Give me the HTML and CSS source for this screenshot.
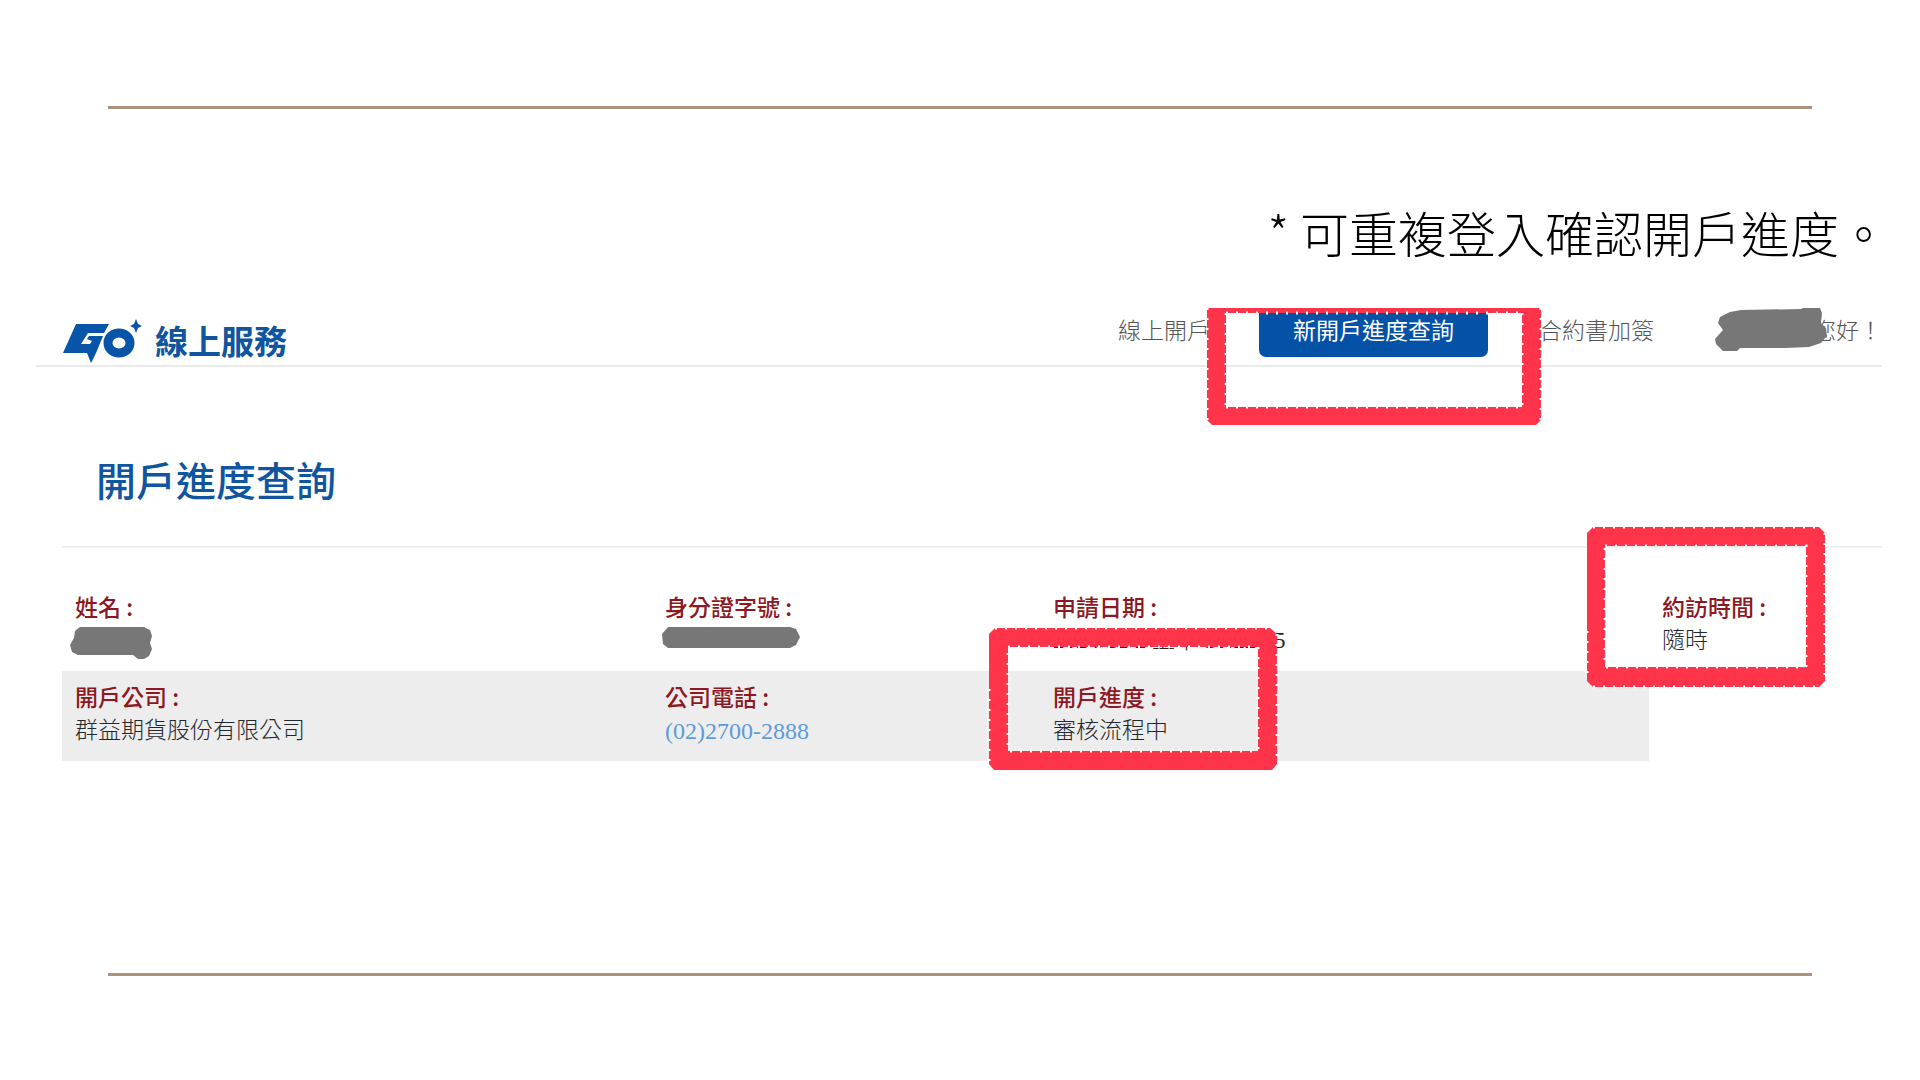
FILE: index.html
```html
<!DOCTYPE html>
<html lang="zh-Hant">
<head>
<meta charset="utf-8">
<title>開戶進度查詢</title>
<link rel="stylesheet" href="styles.css">
</head>
<body>
<main class="slide">
  <p class="note">* 可重複登入確認開戶進度。</p>
  <section class="shot">
    <header class="topbar">
      <a class="brand" href="#">
        <svg class="logo" viewBox="0 0 82 46" aria-hidden="true">
          <path fill="#0754a8" d="M14 6H47L42 15H26L19 26H28L30 23L25 21L27 18H41L34 35L29 45L25 35H1Z"/>
          <ellipse cx="57" cy="25" rx="11" ry="10" fill="none" stroke="#0754a8" stroke-width="9"/>
          <path fill="#0754a8" d="M74 1L76 6L80 8L76 10L74 15L72 10L68 8L72 6Z"/>
        </svg>
        <span class="brand-name">線上服務</span>
      </a>
      <nav class="nav">
        <a class="nav-link" href="#">線上開戶</a>
        <button class="nav-button" type="button">新開戶進度查詢</button>
        <a class="nav-link" href="#">合約書加簽</a>
        <span class="greeting">您好！
          <svg class="mask mask-user" viewBox="0 0 112 44" aria-hidden="true"><path d="M15 4L26 2L86 1L88 0H105L107 5L106 15L111 20L112 28L106 35L94 39L70 40H25L22 43H8L1 36L0 31L8 22L3 15L5 9Z"/></svg>
        </span>
        <svg class="frame frame-nav" viewBox="0 0 336 118" aria-hidden="true">
          <path class="band" d="M1 0V112L6 117H330L335 112V0Z M20 5H316V99H20Z"/>
          <path class="teeth" d="M1 0V112M335 0V112M20 5V99M316 5V99M20 5H316M20 99H316"/>
        </svg>
      </nav>
    </header>
    <h1 class="title">開戶進度查詢</h1>
    <dl class="details">
      <div class="row">
        <div class="cell"><dt>姓名 :</dt><dd>
          <svg class="mask mask-name" viewBox="0 0 82 32" aria-hidden="true"><path d="M10 0H74L80 3L82 9L80 16L82 22L79 29L74 32H68L63 28H8L2 25L0 18L4 11L5 4Z"/></svg></dd></div>
        <div class="cell"><dt>身分證字號 :</dt><dd>
          <svg class="mask mask-id" viewBox="0 0 138 22" aria-hidden="true"><path d="M6 0H128L134 2L138 10L134 18L128 21H6L1 17L0 7Z"/></svg></dd></div>
        <div class="cell"><dt>申請日期 :</dt><dd>2024/12/2 上午 10:22:25</dd></div>
        <div class="cell cell-visit"><dt>約訪時間 :</dt><dd>隨時</dd>
          <svg class="frame frame-visit" viewBox="0 0 240 162" aria-hidden="true">
            <path class="band" d="M7 1H233L239 7V155L233 161H7L1 155V7Z M19 20H220V141H19Z"/>
            <path class="teeth" d="M7 1H233M239 7V155M7 161H233M1 105V155M19 20H220V141H19Z"/>
          </svg>
        </div>
      </div>
      <div class="row row-alt">
        <div class="cell"><dt>開戶公司 :</dt><dd>群益期貨股份有限公司</dd></div>
        <div class="cell"><dt>公司電話 :</dt><dd><a class="phone" href="tel:0227002888">(02)2700-2888</a></dd></div>
        <div class="cell cell-progress"><dt>開戶進度 :</dt><dd>審核流程中</dd>
          <svg class="frame frame-progress" viewBox="0 0 290 144" aria-hidden="true">
            <path class="band" d="M7 1H282L289 7V137L284 143H6L1 137V7Z M20 20H270V124H20Z"/>
            <path class="teeth" d="M7 1H282M289 7V137M1 62V137M20 20H270V124H20Z"/>
          </svg>
        </div>
      </div>
    </dl>
  </section>
</main>
</body>
</html>
```
FILE: styles.css
```css
* { box-sizing: border-box; }
body {
  margin: 0;
  background: #fff;
  color: #1f292d;
  font-family: "Liberation Serif", "Noto Sans CJK TC", sans-serif;
}
a { color: inherit; text-decoration: none; }

.slide { display: flow-root; margin-top: 106px; }
.slide::before,
.slide::after {
  content: "";
  display: block;
  height: 3px;
  margin: 0 108px;
  background: #ab9380;
}
.note {
  margin: 87px 32px 0 0;
  text-align: right;
  font-family: "Noto Sans CJK TC", sans-serif;
  font-weight: 300;
  font-size: 49px;
  line-height: 72px;
  color: #000;
}
.shot { margin: 40px 38px 212px 36px; }

.topbar {
  display: flex;
  justify-content: space-between;
  height: 59px;
  border-bottom: 2px solid #e8eaeb;
}
.brand {
  display: flex;
  align-items: flex-start;
  gap: 11px;
  margin: 10px 0 0 26px;
  color: #0f559f;
}
.logo { width: 82px; height: 46px; }
.brand-name {
  font: 700 33px/44px "Noto Sans CJK TC", sans-serif;
}
.nav {
  display: flex;
  align-items: flex-start;
  position: relative;
  font: 300 23px/43px "Noto Sans CJK TC", sans-serif;
  color: #555;
}
.nav-button {
  width: 229px;
  height: 49px;
  margin: 0 51px 0 49px;
  padding: 0 0 6px;
  border: 0;
  border-radius: 0 0 7px 7px;
  background: #0452a8;
  color: #fff;
  font: 400 23px/43px "Noto Sans CJK TC", sans-serif;
}
.greeting { position: relative; margin-left: 159px; }
.mask { display: block; fill: #777; }
.mask-user {
  position: absolute;
  top: 0;
  left: -98px;
  width: 112px;
  height: 44px;
}
.mask-name { width: 82px; height: 32px; margin-left: -5px; }
.mask-id { width: 138px; height: 22px; margin-left: -3px; }

.title {
  margin: 0 0 0 26px;
  padding: 81px 0 36px 34px;
  border-bottom: 2px solid #eff0f1;
  font: 500 40px/62px "Noto Sans CJK TC", sans-serif;
  color: #0f559f;
}
.details { margin: 33px 0 0 26px; }
.row {
  display: grid;
  grid-template-columns: 590fr 388fr 609fr 233fr;
  height: 90px;
  padding-top: 8px;
}
.row-alt {
  background: linear-gradient(#ededed, #ededed) 0 0 / 87.200% 100% no-repeat;
}
.cell { position: relative; padding-left: 13px; }
dt, dd {
  margin: 0;
  font-size: 23px;
  line-height: 34px;
  white-space: nowrap;
}
dt {
  font-family: "Noto Sans CJK TC", sans-serif;
  font-weight: 500;
  color: #8d1822;
}
dd { display: flow-root; line-height: 36px; font-weight: 300; }
dd .mask { margin-top: 4px; }
.phone { font-size: 24px; color: #5c9bdc; }

.frame { position: absolute; overflow: visible; pointer-events: none; }
.band { fill: #ff344b; fill-rule: evenodd; }
.teeth { fill: none; stroke: #fff; stroke-width: 3; stroke-dasharray: 2 8; }
.frame-nav { left: 88px; top: 0; width: 336px; height: 118px; }
.frame-visit { left: -63px; top: -63px; width: 240px; height: 162px; }
.frame-progress { left: -52px; top: -52px; width: 290px; height: 144px; z-index: 1; }
```
